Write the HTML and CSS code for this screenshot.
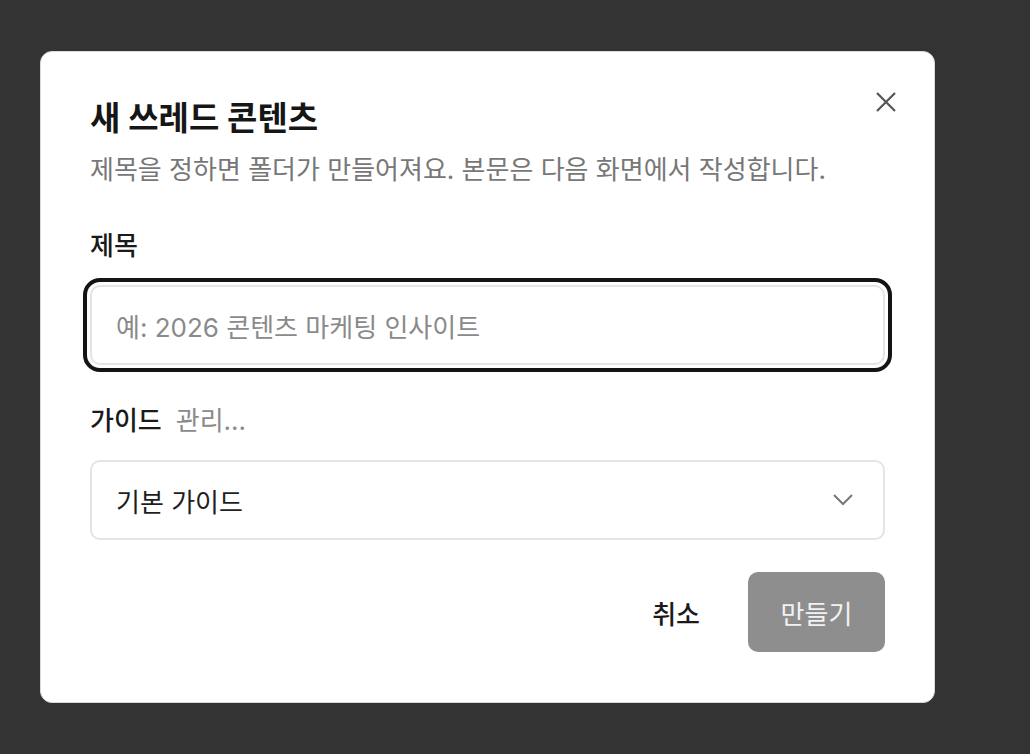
FILE: index.html
```html
<!DOCTYPE html>
<html lang="ko">
<head>
<meta charset="utf-8">
<title>새 쓰레드 콘텐츠</title>
<link rel="stylesheet" href="styles.css">
</head>
<body>
<div class="dialog" role="dialog">
  <button class="close" aria-label="닫기">
    <svg width="20" height="20" viewBox="0 0 20 20"><path d="M1 1 L19 19 M19 1 L1 19" stroke="#555" stroke-width="2.2" fill="none" stroke-linecap="butt"/></svg>
  </button>
  <h1 class="title">새 쓰레드 콘텐츠</h1>
  <p class="subtitle">제목을 정하면 폴더가 만들어져요. 본문은 다음 화면에서 작성합니다.</p>

  <div class="field first">
    <label class="label">제목</label>
    <div class="input focused">예: 2026 콘텐츠 마케팅 인사이트</div>
  </div>

  <div class="field">
    <div class="label-row"><span class="label">가이드</span><span class="manage">관리...</span></div>
    <div class="select">
      <span>기본 가이드</span>
      <svg class="chev" width="20" height="12" viewBox="0 0 20 12"><path d="M1 1 L10 10 L19 1" stroke="#777" stroke-width="2" fill="none"/></svg>
    </div>
  </div>

  <div class="actions">
    <button class="btn cancel">취소</button>
    <button class="btn create">만들기</button>
  </div>
</div>
</body>
</html>
```

FILE: styles.css
```css
html, body {
  margin: 0;
  padding: 0;
  background: #333333;
  height: 100%;
}
body {
  padding: 51px 0 0 40px;
  box-sizing: border-box;
  font-family: "Inter", "Noto Sans CJK KR", "Noto Sans", sans-serif;
}
.dialog {
  position: relative;
  width: 895px;
  height: 652px;
  box-sizing: border-box;
  background: #ffffff;
  border: 1px solid #d9d9d9;
  border-radius: 12px;
  padding: 49px;
}
.close {
  position: absolute;
  top: 40px;
  right: 38px;
  width: 20px;
  height: 20px;
  padding: 0;
  border: 0;
  background: none;
  display: flex;
}
.title {
  margin: 0;
  font-size: 33px;
  line-height: 34px;
  font-weight: 700;
  color: #161616;
}
.subtitle {
  margin: 19px 0 0;
  font-size: 26px;
  line-height: 32px;
  color: #777777;
  font-weight: 400;
}
.field { margin-top: 40px; }
.field.first { margin-top: 44px; }
.label {
  display: block;
  font-size: 26px;
  line-height: 32px;
  font-weight: 500;
  color: #1a1a1a;
}
.label-row {
  display: flex;
  align-items: baseline;
  gap: 14px;
}
.manage {
  font-size: 26px;
  line-height: 32px;
  color: #8a8a8a;
}
.input, .select {
  margin-top: 23px;
  height: 80px;
  box-sizing: border-box;
  border: 2px solid #e4e4e4;
  border-radius: 10px;
  padding: 0 24px;
  display: flex;
  align-items: center;
  font-size: 26px;
}
.input {
  color: #8a8a8a;
}
.input.focused {
  outline: 4px solid #141414;
  outline-offset: 3px;
}
.select {
  justify-content: space-between;
  color: #1e1e1e;
  padding-right: 30px;
}
.chev { display: block; }
.actions {
  margin-top: 32px;
  display: flex;
  justify-content: flex-end;
  align-items: center;
  gap: 24px;
}
.btn {
  font-family: inherit;
  font-size: 26px;
  height: 80px;
  border: 0;
  border-radius: 10px;
  padding: 0 24px;
  cursor: pointer;
}
.cancel {
  background: none;
  color: #1a1a1a;
  font-weight: 500;
}
.create {
  width: 137px;
  background: #8e8e8e;
  color: #f2f2f2;
}
```
